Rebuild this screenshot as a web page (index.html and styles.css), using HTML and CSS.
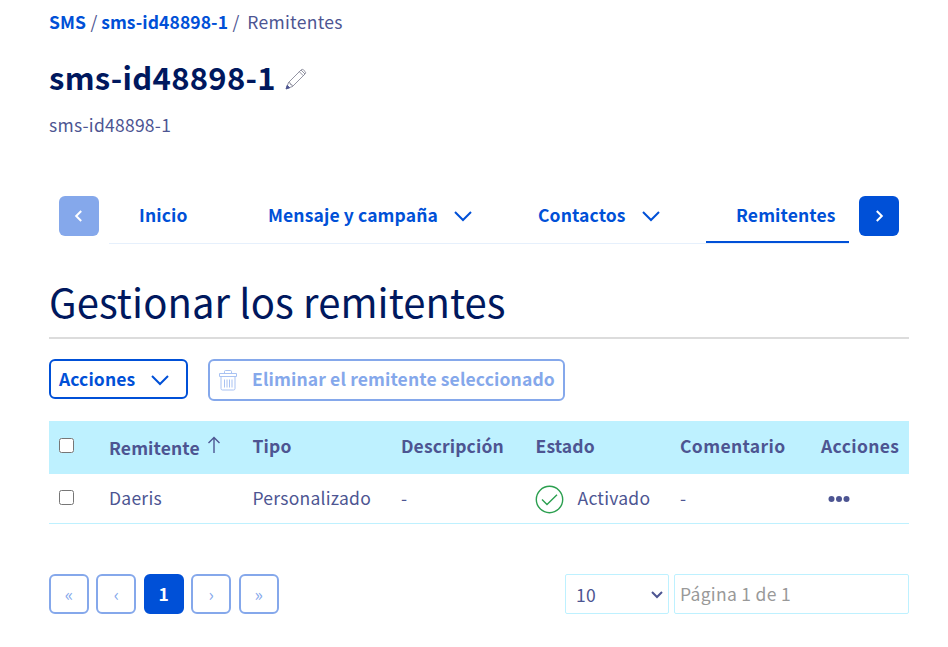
FILE: index.html
```html
<!DOCTYPE html>
<html lang="es">
<head>
<meta charset="utf-8">
<title>Remitentes</title>
<link rel="stylesheet" href="styles.css">
</head>
<body>
<main class="page">
  <nav class="crumbs"><a class="crumb-sms">SMS</a><i>/</i><a class="crumb-id">sms-id48898-1</a><i>/</i><span>Remitentes</span></nav>
  <header class="title">
    <h1><span class="t">sms-id48898-1</span></h1>
    <svg class="pencil" width="22" height="22" viewBox="0 0 22 22" fill="none" stroke="#77788c" stroke-width=".8"><path d="M1.3 20.7 3.5 14.5 16 2Q17.3.7 18.6 2L20 3.4Q21.3 4.700 20 6L7.500 18.500ZM3.500 14.500Q5.800 14.300 5.500 16.500 7.600 16.200 7.500 18.500M14.300 3.700 18.300 7.700M16 2 20 6"/><path d="m1 21 1.200-3.800 2.600 2.600Z" fill="#4d5592" stroke="#4d5592"/></svg>
  </header>
  <p class="subtitle"><span class="t">sms-id48898-1</span></p>

  <div class="tabs">
    <button class="arrow off"><svg width="20" height="20" viewBox="0 0 20 20"><path d="m12.200 5-5 5 5 5"/></svg></button>
    <div class="tablist">
      <a class="tab tab1"><span class="t">Inicio</span></a>
      <a class="tab tab2"><span class="t">Mensaje y campaña</span><svg class="chev" width="20" height="12" viewBox="0 0 20 12"><path d="m2 2 8 8 8-8"/></svg></a>
      <a class="tab tab3"><span class="t">Contactos</span><svg class="chev" width="20" height="12" viewBox="0 0 20 12"><path d="m2 2 8 8 8-8"/></svg></a>
      <a class="tab active"><span class="t">Remitentes</span></a>
    </div>
    <button class="arrow"><svg width="20" height="20" viewBox="0 0 20 20"><path d="m7.800 5 5 5-5 5"/></svg></button>
  </div>

  <h2><span class="t">Gestionar los remitentes</span></h2>

  <div class="toolbar">
    <button class="btn"><span class="t">Acciones</span><svg class="chev" width="20" height="12" viewBox="0 0 20 12"><path d="m2 2 8 8 8-8"/></svg></button>
    <button class="btn disabled"><svg class="trash" width="18" height="21" viewBox="0 0 18 21" fill="none" stroke="#a9c2f2" stroke-width="1"><path d="M.5 3.500h17v3H.5zM5.500 3.500v-2q0-1 1-1h5q1 0 1 1v2M2 6.500v12q0 1.500 1.500 1.500h11q1.500 0 1.500-1.500v-12M5.500 9.500v8M8 9.500v8M10.500 9.500v8M13 9.500v8"/></svg><span class="t">Eliminar el remitente seleccionado</span></button>
  </div>

  <div class="table">
    <div class="row head">
      <input type="checkbox">
      <span class="sort"><span class="t">Remitente</span><svg width="14" height="18" viewBox="0 0 14 18"><path d="M7 17V1.500M1.500 7 7 1.500 12.500 7"/></svg></span>
      <span class="t">Tipo</span><span class="t">Descripción</span><span class="t">Estado</span><span class="t wide">Comentario</span><span class="t wide">Acciones</span>
    </div>
    <div class="row">
      <input type="checkbox">
      <span class="t">Daeris</span><span class="t">Personalizado</span><span class="t">-</span>
      <span class="state"><svg width="29" height="29" viewBox="0 0 29 29"><circle cx="14.500" cy="14.500" r="13.200"/><path d="m7 14.500 5 5L22 9.800"/></svg><span class="t">Activado</span></span>
      <span class="t">-</span>
      <svg class="dots" width="22" height="8" viewBox="0 0 22 8"><circle cx="3.500" cy="4" r="3"/><circle cx="11" cy="4" r="3"/><circle cx="18.500" cy="4" r="3"/></svg>
    </div>
  </div>

  <footer class="foot">
    <div class="pager"><button>«</button><button>‹</button><button class="current">1</button><button>›</button><button>»</button></div>
    <div class="fields">
      <div class="select"><span class="t">10</span><svg width="14" height="9" viewBox="0 0 14 9"><path d="m2 2 5 5 5-5"/></svg></div>
      <input class="goto" placeholder="Página 1 de 1">
    </div>
  </footer>
</main>
</body>
</html>
```
FILE: styles.css
```css
* { box-sizing: border-box; }
body { margin: 0; background: #fff; color: #4d5592; font: 400 17.5px/24px "Noto Sans CJK JP", "Noto Sans", sans-serif; letter-spacing: .25px; height: 647px; overflow: hidden; }
button, input { font: inherit; letter-spacing: inherit; }
.t { white-space: nowrap; }
.page { width: 860px; margin-left: 49px; padding-top: 10px; }
.crumbs { display: flex; height: 24px; white-space: nowrap; }
.crumbs a { color: #0050d7; font-weight: 600; letter-spacing: .08px; }
.crumbs i { font-style: normal; margin: 0 3.500px 0 4.500px; }
.crumbs span { margin-left: 4px; letter-spacing: .3px; }
.title { display: flex; align-items: center; height: 44px; margin-top: 21px; gap: 9px; }
h1 { margin: 0; color: #00185e; font-size: 31px; line-height: 44px; font-weight: 700; letter-spacing: .3px; }
.pencil { margin-top: 4px; }
.subtitle { margin: 14px 0 0; height: 24px; }
.tabs { display: flex; gap: 10px; padding: 0 10px; margin-top: 59px; height: 48px; }
.arrow { width: 40px; height: 40px; flex: none; padding: 0; border: 0; border-radius: 6px; background: #0050d7; display: grid; place-items: center; }
.arrow.off { background: #85a8eb; }
.arrow path { fill: none; stroke: #fff; stroke-width: 2; }
.tablist { flex: 1; display: flex; height: 48px; border-bottom: 1px solid #e6f0fc; }
.tab { display: flex; align-items: center; height: 47px; padding: 0 0 9px 30px; color: #0050d7; font-weight: 600; letter-spacing: .12px; }
.tab .t { margin-top: -1px; }
.tab1 { width: 129px; }
.tab2 { width: 270px; }
.tab3 { width: 198px; }
.tab .chev { margin-left: 15px; margin-top: 1px; }
.chev path { fill: none; stroke: #0050d7; stroke-width: 2; }
.tab.active { flex: 1; border-bottom: 2px solid #0050d7; padding-bottom: 7px; }
h2 { margin: 29px 0 0; height: 66px; border-bottom: 2px solid #dcdcdc; color: #00185e; font-size: 40px; line-height: 56px; font-weight: 400; letter-spacing: .1px; }
.toolbar { display: flex; align-items: flex-start; gap: 20px; margin-top: 20px; height: 62px; }
.btn { display: flex; align-items: center; height: 40px; width: 139px; padding: 0 8px; border: 2px solid #0050d7; border-radius: 6px; background: #fff; color: #0050d7; font-weight: 600; letter-spacing: .1px; }
.btn .t { margin-top: -1px; }
.btn .chev { margin-left: 14.500px; margin-top: 1px; }
.btn.disabled { width: 357px; height: 42px; border-color: #85a8eb; color: #85a8eb; padding: 0 9px; letter-spacing: .13px; }
.btn.disabled .t { margin-top: -3px; }
.trash { flex: none; margin-left: 0; margin-right: 15px; }
.btn.disabled { justify-content: flex-start; }
.row { display: grid; grid-template-columns: 50px 143.500px 148.500px 134.500px 144.500px 141px 1fr; align-items: center; height: 50px; padding-left: 10px; border-bottom: 1px solid #bef1ff; }
.row > .t, .state .t { margin-top: -1px; }
.row input { margin: -2px 0 0; width: 15px; height: 15px; }
.head { height: 53px; background: #bef1ff; font-weight: 600; letter-spacing: .12px; }
.row.head > .t { margin-top: -3px; }
.row.head input { margin-top: -4px; }
.row > .wide { letter-spacing: .36px; }
.sort { display: flex; align-items: center; gap: 7px; padding-top: 1px; }
.sort svg { margin-top: -6px; }
.sort path { fill: none; stroke: #4d5592; stroke-width: 1.400; }
.state { display: flex; align-items: center; gap: 14px; margin-left: -1px; }
.state svg { fill: none; stroke: #2b9f4f; stroke-width: 1.400; margin-top: 2px; }
.dots { fill: #4d5592; margin-left: 7px; }
.foot { display: flex; justify-content: space-between; margin-top: 50px; }
.pager { display: flex; gap: 7.450px; }
.pager button { width: 40px; height: 40px; padding: 0 0 1px; border: 2px solid #85a8eb; border-radius: 6px; background: #fff; color: #85a8eb; }
.pager .current { background: #0050d7; border-color: #0050d7; color: #fff; font-weight: 700; }
.fields { display: flex; gap: 5px; }
.select { display: flex; align-items: center; justify-content: space-between; width: 104px; height: 40px; padding: 0 4px 0 10px; border: 1px solid #bef1ff; border-radius: 2px; }
.select .t { padding-top: 2px; }
.select path { fill: none; stroke: #4d5592; stroke-width: 2; }
.goto { width: 235px; height: 40px; padding: 0 5px 2px; border: 1px solid #bef1ff; border-radius: 2px; letter-spacing: .3px; }
.goto::placeholder { color: #999; opacity: 1; }
```
